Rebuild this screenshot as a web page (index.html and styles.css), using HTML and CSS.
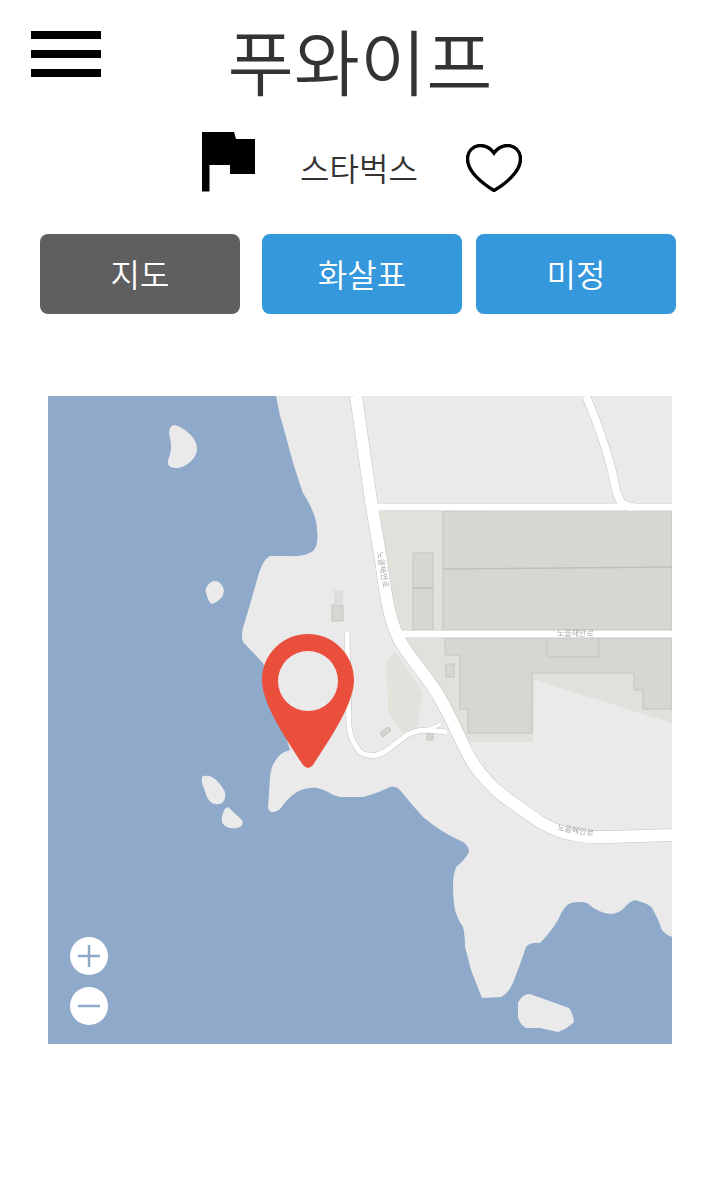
FILE: index.html
```html
<!DOCTYPE html>
<html lang="ko">
<head>
<meta charset="utf-8">
<title>푸와이프</title>
<link rel="stylesheet" href="styles.css">
</head>
<body>
<header class="top">
  <button class="menu" aria-label="메뉴"><span></span><span></span><span></span></button>
  <h1 class="title">푸와이프</h1>
</header>
<section class="place">
  <svg class="flag" viewBox="202 132 54 60" width="54" height="60"><path d="M202 132H234L236 139H255V174H230V165H209.5V191.5H202Z"/></svg>
  <span class="place-name">스타벅스</span>
  <svg class="heart" viewBox="0 0 56 48" width="56" height="48"><path d="M28 9C24 3.5 19 1.5 14.5 1.5C7 1.5 1.5 7.5 1.5 15C1.5 28 17 40 28 46.5C39 40 54.5 28 54.5 15C54.5 7.5 49 1.5 41.5 1.5C37 1.5 32 3.5 28 9Z"/></svg>
</section>
<nav class="tabs">
  <button class="tab tab-active">지도</button>
  <button class="tab">화살표</button>
  <button class="tab">미정</button>
</nav>
<div class="map">
  <svg class="map-art" viewBox="48 396 624 648" width="624" height="648">
    <defs><filter id="soft" x="0" y="0" width="100%" height="100%"><feGaussianBlur stdDeviation="0.45"/></filter></defs>
    <g filter="url(#soft)">
      <rect class="water" x="48" y="396" width="624" height="648"/>
      <path class="land" d="M276 396Q279 415 285 433Q293 465 303 493Q317 515 317 530Q319 545 313 551Q305 557 290 556L270 556Q262 560 257 580Q250 605 243 628Q241 635 243 642L263 663L290 750Q282 752 278 757Q271 765 270 777L268 808Q270 813 273 812Q279 812 283 805Q288 798 297 792Q307 787 317 788Q326 790 333 795L340 797L363 797Q378 793 390 787Q396 786 400 790Q412 805 423 817Q442 833 463 842Q469 846 469 852Q465 860 456 867Q453 875 453 883Q453 900 455 910Q458 920 463 927Q465 935 465 947Q468 958 471 970L482 998L501 997Q508 994 513 983Q520 965 526 947Q530 942 540 943Q550 933 558 920Q564 905 571 903Q580 901 587 903Q600 914 611 914Q620 913 624 908Q630 901 635 900Q648 903 652 908Q658 918 662 930Q666 935 672 937V396Z"/>
      <path class="land" d="M175 425C182 427 197 436 197 449C197 458 186 468 176 468C170 468 167 465 168 461C171 452 172 447 170 438C168 430 170 425 175 425Z"/>
      <path class="land" d="M215 581Q220 581 223 587Q225 592 222 597Q218 602 212 604Q209 604 206 593Q205 588 208 585Q211 581 215 581Z"/>
      <path class="land" d="M203 776Q208 775 212 777Q220 782 225 792Q226 798 223 802Q220 805 215 804Q210 803 207 797L202 783Q201 778 203 776Z"/>
      <path class="land" d="M228 807L242 820Q244 824 240 827Q235 829 230 828Q224 827 222 822Q221 817 223 813Q225 807 228 807Z"/>
      <path class="land" d="M518 1003Q522 994 530 994L569 1008Q573 1013 574 1022Q567 1029 558 1032L540 1028L526 1028Q520 1025 518 1017Z"/>

      <path class="block-light" d="M380 513Q380 511 384 511L672 509V630H402Q393 615 388 590Z"/>
      <path class="block-light" d="M403 638H672V723L535 680L533 742H468L440 690Z"/>
      <path class="blob" d="M390 657Q386 662 387 670L388 710Q394 725 403 733L417 728L423 693L396 652Z"/>
      <path class="block" d="M443 511L672 509V630H443Z"/>
      <path class="block" d="M445 638V655H460V709H468V733H532V673H634V690H643V709H672V638Z"/>
      <path class="seam" d="M443 569L672 567"/>
      <path class="block" d="M413 553H433V630H413Z"/>
      <path class="seam" d="M413 588H433"/>
      <path class="block" d="M547 638H599V657H547Z"/>
      <path class="block" d="M446 664H454V677H446Z"/>
      <path class="block" d="M380 733L388 727L391 730L383 737Z"/>
      <path class="block" d="M427 733H433V740H427Z"/>
      <path class="block" d="M332 605H343V621H332Z"/>
      <path class="block-faint" d="M334 590H343V605H334Z"/>

      <g class="road-case">
        <path stroke-width="8" d="M372 507L672 507"/>
        <path stroke-width="8" d="M396 634L672 634"/>
        <path stroke-width="9" d="M586 396C592 410 597 423 601 435C607 452 611 466 614 480C616 492 618 498 621 502C624 506 628 507 634 507"/>
        <path stroke-width="13" d="M356 396L372 507L381 560C385 590 388 615 398 637C405 652 420 668 433 687C442 700 447 712 453 723C460 738 465 750 473 763C483 778 492 787 503 796C520 808 530 815 540 822C553 830 563 833 575 835C590 838 600 837 610 837L672 835"/>
        <path stroke-width="6" d="M347 632L349 725Q350 740 360 752Q368 757 377 755Q384 753 390 748L407 735Q417 730 427 730L447 732"/>
        <path stroke-width="4" d="M427 730L441 724"/>
      </g>
      <g class="road">
        <path stroke-width="7" d="M372 507L672 507"/>
        <path stroke-width="7" d="M396 634L672 634"/>
        <path stroke-width="8" d="M586 396C592 410 597 423 601 435C607 452 611 466 614 480C616 492 618 498 621 502C624 506 628 507 634 507"/>
        <path stroke-width="12" d="M356 396L372 507L381 560C385 590 388 615 398 637C405 652 420 668 433 687C442 700 447 712 453 723C460 738 465 750 473 763C483 778 492 787 503 796C520 808 530 815 540 822C553 830 563 833 575 835C590 838 600 837 610 837L672 835"/>
        <path stroke-width="5" d="M347 632L349 725Q350 740 360 752Q368 757 377 755Q384 753 390 748L407 735Q417 730 427 730L447 732"/>
        <path stroke-width="3" d="M427 730L441 724"/>
      </g>
      <text class="road-label" transform="translate(377 552) rotate(80)">노을해안로</text>
      <text class="road-label" transform="translate(557 636)">노을해안로</text>
      <text class="road-label" transform="translate(557 830) rotate(10)">노을해안로</text>
    </g>
    <path class="pin" d="M308 634C333.4 634 354 654.6 354 680C354 706 325 746 313 765Q308 771 303 765C291 746 262 706 262 680C262 654.6 282.6 634 308 634Z"/>
    <circle class="pin-hole" cx="308" cy="681" r="30"/>
  </svg>
  <div class="zoom">
    <button class="zoom-btn" aria-label="확대"><svg viewBox="0 0 24 24" width="24" height="24"><path d="M1 12H23M12 1V23"/></svg></button>
    <button class="zoom-btn" aria-label="축소"><svg viewBox="0 0 24 24" width="24" height="24"><path d="M1 12H23"/></svg></button>
  </div>
</div>
</body>
</html>
```
FILE: styles.css
```css
* { box-sizing: border-box; }
html, body { margin: 0; padding: 0; background: #fff; }
body {
  width: 720px;
  height: 1200px;
  overflow: hidden;
  font-family: "Noto Sans CJK KR", "Noto Sans", sans-serif;
  color: #333;
}
button { font: inherit; border: 0; padding: 0; cursor: pointer; }

.top {
  display: grid;
  grid-template-columns: 1fr auto 1fr;
  align-items: start;
  height: 132px;
}
.menu {
  display: flex;
  flex-direction: column;
  gap: 11px;
  width: 70px;
  margin: 31px 0 0 31px;
  background: none;
}
.menu span { display: block; height: 8px; background: #000; }
.title {
  margin: 0;
  grid-column: 2;
  font-size: 72px;
  line-height: 118px;
  font-weight: 350;
  color: #333;
}

.place {
  display: flex;
  align-items: flex-start;
  justify-content: center;
  height: 102px;
  padding-left: 4px;
}
.flag { fill: #000; display: block; }
.place-name {
  font-size: 32px;
  line-height: 70px;
  margin: 0 48px 0 44px;
  font-weight: 350;
  color: #333;
}
.heart { display: block; margin-top: 12px; fill: #fff; stroke: #000; stroke-width: 3.4; }

.tabs {
  display: flex;
  gap: 14px;
  padding-left: 40px;
}
.tab {
  width: 200px;
  height: 80px;
  padding-bottom: 3px;
  border-radius: 8px;
  background: #3598dc;
  color: #fff;
  font-size: 32px;
  font-weight: 350;
}
.tab-active { background: #5f5f5f; margin-right: 8px; }

.map {
  position: relative;
  width: 624px;
  height: 648px;
  margin: 82px 0 0 48px;
}
.map-art { display: block; }
.water { fill: #8fa9cb; }
.land { fill: #eaeaea; }
.block-light { fill: #dfe1da; }
.blob { fill: #e0e3dc; }
.block { fill: #d5d7d0; stroke: #c3c5bd; stroke-width: 1; }
.block-faint { fill: #dedede; }
.seam { fill: none; stroke: #bfc1b9; stroke-width: 1.5; }
.road-case path { fill: none; stroke: #c4c4c4; }
.road path { fill: none; stroke: #fff; }
.road-label { font-size: 8px; fill: #aaa; font-family: "Noto Sans CJK KR", sans-serif; }
.pin { fill: #ea4e3c; }
.pin-hole { fill: #eaeaea; }

.zoom {
  position: absolute;
  left: 22px;
  top: 541px;
  display: flex;
  flex-direction: column;
  gap: 12px;
}
.zoom-btn {
  display: flex;
  align-items: center;
  justify-content: center;
  width: 38px;
  height: 38px;
  border-radius: 50%;
  background: #fff;
}
.zoom-btn svg { fill: none; stroke: #8fa9cb; stroke-width: 2.5; display: block; }
```
